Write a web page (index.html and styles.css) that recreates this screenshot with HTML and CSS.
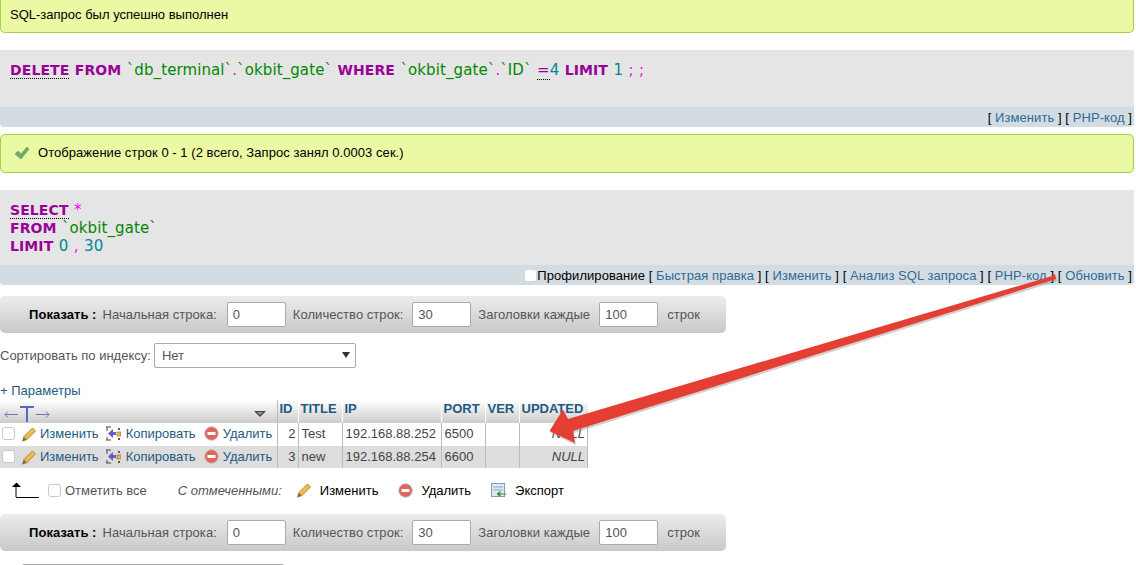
FILE: index.html
```html
<!DOCTYPE html>
<html lang="ru">
<head>
<meta charset="utf-8">
<title>phpMyAdmin</title>
<link rel="stylesheet" href="styles.css">
</head>
<body>
<div class="notice first">SQL-запрос был успешно выполнен</div>

<div class="sqlbox one">
  <div class="sql"><span class="kw doc">DELETE</span> <span class="kw">FROM</span> <span class="id">`db_terminal`</span><span class="pu">.</span><span class="id">`okbit_gate`</span> <span class="kw">WHERE</span> <span class="id">`okbit_gate`</span><span class="pu">.</span><span class="id">`ID`</span> <span class="op">=</span><span class="num">4</span> <span class="kw">LIMIT</span> <span class="num">1</span> <span class="pu">; ;</span></div>
  <div class="tools">[ <a>Изменить</a> ] [ <a>PHP-код</a> ]</div>
</div>

<div class="notice second">
  <svg class="check" width="16" height="14" viewBox="0 0 16 14"><path d="M1 8l3-3 3 3 6-7 2 2-8 10z" fill="#6fae6b" stroke="#5a9a58" stroke-width=".6"/></svg>
  <span>Отображение строк 0 - 1 (2 всего, Запрос занял 0.0003 сек.)</span>
</div>

<div class="sqlbox two">
  <div class="sql"><span class="kw doc">SELECT</span> <span class="pu">*</span><br><span class="kw">FROM</span> <span class="id">`okbit_gate`</span><br><span class="kw">LIMIT</span> <span class="num">0</span> <span class="pu">,</span> <span class="num">30</span></div>
  <div class="tools"><span class="fakecheck"></span><span class="profile">Профилирование</span> [ <a>Быстрая правка</a> ] [ <a>Изменить</a> ] [ <a>Анализ SQL запроса</a> ] [ <a>PHP-код</a> ] [ <a>Обновить</a> ]</div>
</div>

<div class="nav">
  <b class="show">Показать :</b>
  <span class="l1">Начальная строка:</span><span class="input">0</span>
  <span class="l2">Количество строк:</span><span class="input">30</span>
  <span class="l2">Заголовки каждые</span><span class="input">100</span>
  <span class="l3">строк</span>
</div>

<div class="sort"><span>Сортировать по индексу:</span><span class="select">Нет<i class="caret"></i></span></div>

<div class="params">+ Параметры</div>

<table class="data">
  <thead>
    <tr>
      <th class="c0"><span class="thead-tools">
        <svg width="48" height="16" viewBox="0 0 48 16"><path d="M2 8.500h13M2 8.500l3-3M2 8.500l3 3M33 8.500h13M46 8.500l-3-3M46 8.500l-3 3" fill="none" stroke="#6a78b8"/><path d="M17 1h14M24 1v15" fill="none" stroke="#5a6ab8" stroke-width="2"/></svg>
        <svg class="sorttri" width="12" height="6" viewBox="0 0 12 6"><path d="M0 0h12L6 6z" fill="#444"/><path d="M3 1h6L6 4z" fill="#999"/></svg>
      </span></th>
      <th class="c1">ID</th><th class="c2">TITLE</th><th class="c3">IP</th><th class="c4">PORT</th><th class="c5">VER</th><th class="c6">UPDATED</th>
    </tr>
  </thead>
  <tbody>
    <tr>
      <td class="c0"><div class="acts">
        <span class="fakecheck row"></span>
        <a class="act a1"><svg width="16" height="16" viewBox="0 0 16 16"><path d="M3 10.500L11.500 2l3 3L6 13.500z" fill="#eebd4f" stroke="#b5842c"/><path d="M1 15.500l1.500-5 3.500 3.500z" fill="#8a6a3a"/></svg>Изменить</a>
        <a class="act a2"><svg width="15" height="15" viewBox="0 0 15 15"><path d="M0 1h5M1 1v4M1 11v3M0 14h5" fill="none" stroke="#444"/><path d="M2 7.500L7 3v3h3v3H7v3z" fill="#6a5acd"/><rect x="11" y="6" width="4" height="4" fill="#f0c030" stroke="#555" stroke-width=".5"/><rect x="12" y="2" width="2" height="2" fill="#55a"/><rect x="12" y="12" width="2" height="2" fill="#555"/></svg>Копировать</a>
        <a class="act a3"><svg width="15" height="15" viewBox="0 0 15 15"><circle cx="7.500" cy="7.500" r="6.800" fill="#e0655a" stroke="#c9c0b8"/><rect x="3.500" y="6" width="8" height="3" fill="#fff"/></svg>Удалить</a>
      </div></td>
      <td class="r">2</td><td>Test</td><td>192.168.88.252</td><td>6500</td><td></td><td class="null">NULL</td>
    </tr>
    <tr class="even">
      <td class="c0"><div class="acts">
        <span class="fakecheck row"></span>
        <a class="act a1"><svg width="16" height="16" viewBox="0 0 16 16"><path d="M3 10.500L11.500 2l3 3L6 13.500z" fill="#eebd4f" stroke="#b5842c"/><path d="M1 15.500l1.500-5 3.500 3.500z" fill="#8a6a3a"/></svg>Изменить</a>
        <a class="act a2"><svg width="15" height="15" viewBox="0 0 15 15"><path d="M0 1h5M1 1v4M1 11v3M0 14h5" fill="none" stroke="#444"/><path d="M2 7.500L7 3v3h3v3H7v3z" fill="#6a5acd"/><rect x="11" y="6" width="4" height="4" fill="#f0c030" stroke="#555" stroke-width=".5"/><rect x="12" y="2" width="2" height="2" fill="#55a"/><rect x="12" y="12" width="2" height="2" fill="#555"/></svg>Копировать</a>
        <a class="act a3"><svg width="15" height="15" viewBox="0 0 15 15"><circle cx="7.500" cy="7.500" r="6.800" fill="#e0655a" stroke="#c9c0b8"/><rect x="3.500" y="6" width="8" height="3" fill="#fff"/></svg>Удалить</a>
      </div></td>
      <td class="r">3</td><td>new</td><td>192.168.88.254</td><td>6600</td><td></td><td class="null">NULL</td>
    </tr>
  </tbody>
</table>

<div class="bulk">
  <svg class="arrowup" width="28" height="16" viewBox="0 0 28 16"><path d="M5 15.500h23M5 15V4" fill="none" stroke="#000"/><path d="M1 5h9L5.500 .5z" fill="#000"/></svg>
  <span class="fakecheck all"></span><span class="checkall">Отметить все</span>
  <em>С отмеченными:</em>
  <a class="bact b1"><svg width="16" height="16" viewBox="0 0 16 16"><path d="M3 10.500L11.500 2l3 3L6 13.500z" fill="#eebd4f" stroke="#b5842c"/><path d="M1 15.500l1.500-5 3.500 3.500z" fill="#8a6a3a"/></svg>Изменить</a>
  <a class="bact b2"><svg width="15" height="15" viewBox="0 0 15 15"><circle cx="7.500" cy="7.500" r="6.800" fill="#e0655a" stroke="#c9c0b8"/><rect x="3.500" y="6" width="8" height="3" fill="#fff"/></svg>Удалить</a>
  <a class="bact b3"><svg width="16" height="15" viewBox="0 0 16 15"><rect x=".5" y=".5" width="13" height="13" fill="#dfe8f5" stroke="#7d9cc4"/><path d="M2 4h10M2 7h10" stroke="#9ab"/><path d="M15.500 11H6M6 11l3-2.500v5z" fill="#3f9a3f" stroke="#3f9a3f"/></svg>Экспорт</a>
</div>

<div class="nav lower">
  <b class="show">Показать :</b>
  <span class="l1">Начальная строка:</span><span class="input">0</span>
  <span class="l2">Количество строк:</span><span class="input">30</span>
  <span class="l2">Заголовки каждые</span><span class="input">100</span>
  <span class="l3">строк</span>
</div>

<div class="peek"></div>

<svg class="bigarrow" width="1136" height="565" viewBox="0 0 1136 565">
  <path d="M1052 276l3-2 1 5L573 431l2 12-25.500-12L563 409.500l5 9.500z" fill="#8f8a85" opacity=".4" transform="translate(1 2)"/>
  <path d="M1052 276l3-2 1 5L573 431l2 12-25.500-12L563 409.500l5 9.500z" fill="#e53f33"/>
</svg>
</body>
</html>
```

FILE: styles.css
```css
* { box-sizing: border-box; }
html, body { margin: 0; padding: 0; }
body {
  width: 1136px;
  height: 565px;
  overflow: hidden;
  position: relative;
  background: #fff;
  font-family: "Liberation Sans", Arial, sans-serif;
  font-size: 13px;
  color: #444;
}
a { color: #235a81; }

.notice {
  width: 1134px;
  background: #ebf8a4;
  border: 1px solid #a2d246;
  border-radius: 5px;
  color: #000;
  display: flex;
  align-items: center;
}
.notice.first { height: 33px; border-top: 0; border-radius: 0 0 5px 5px; padding: 0 0 3px 9px; }
.notice.second { height: 39px; margin-top: 7px; padding: 0 0 2px 13px; gap: 8px; letter-spacing: .05px; }
.check { flex: none; }

.sqlbox { width: 1134px; border-radius: 0 0 4px 4px; overflow: hidden; }
.sqlbox.one { margin-top: 17px; }
.sqlbox.two { margin-top: 17px; }
.sql {
  background: #e5e5e5;
  font-family: "DejaVu Sans", sans-serif;
  font-size: 15px;
  line-height: 18px;
  padding: 11px 10px 0;
  white-space: pre-wrap;
  letter-spacing: .1px;
  word-spacing: .5px;
}
.one .sql { height: 57px; }
.two .sql { height: 75px; }
.kw { color: #909; font-weight: bold; font-size: 14px; letter-spacing: .1px; }
.doc { border-bottom: 1px dotted #000; }
.id { color: #080; }
.pu { color: #f0f; }
.op { color: #909; border-bottom: 1px dotted #000; }
.num { color: #089; }
.tools {
  background: #d3dce3;
  height: 20px;
  line-height: 21px;
  text-align: right;
  color: #000;
  padding-right: 2px;
  letter-spacing: .07px;
}
.tools a { color: #2f6b97; }
.profile { color: #000; }
.fakecheck {
  display: inline-block;
  width: 13px;
  height: 13px;
  background: #fff;
  border: 1px solid #c8c8c8;
  border-radius: 3px;
}
.tools .fakecheck { vertical-align: -2px; border-color: #d8d8d8; }

.nav {
  width: 726px;
  height: 37px;
  margin-top: 11px;
  display: flex;
  align-items: center;
  padding-left: 29px;
  border-radius: 5px;
  background: linear-gradient(#ececec, #c9c9c9);
  color: #555;
  letter-spacing: .05px;
}
.nav.lower { margin-top: 13px; }
.show { color: #000; font-weight: bold; margin-right: 6px; }
.l1 { margin-right: 10px; }
.l2 { margin: 0 9px 0 7px; }
.l3 { margin-left: 9px; }
.input {
  display: block;
  width: 59px;
  height: 25px;
  line-height: 23px;
  background: #fff;
  border: 1px solid #aaa;
  border-radius: 2px;
  padding-left: 5px;
  color: #555;
}

.sort { display: flex; align-items: center; gap: 3px; height: 25px; margin-top: 10px; color: #555; }
.select {
  position: relative;
  width: 202px;
  height: 25px;
  line-height: 23px;
  border: 1px solid #aaa;
  border-radius: 2px;
  padding-left: 7px;
  background: #fff;
}
.caret {
  position: absolute;
  right: 5px;
  top: 8px;
  border: 4px solid transparent;
  border-top: 6px solid #333;
  border-bottom: 0;
}

.params { margin-top: 15px; height: 17px; line-height: 15px; color: #235a81; }

.data { border-collapse: collapse; table-layout: fixed; width: 588px; }
.data th {
  height: 23px;
  padding: 0 1px 6px 2px;
  font-size: 13px;
  font-weight: bold;
  color: #235a81;
  text-align: left;
  background: linear-gradient(#fff, #ccc);
  border-right: 1px solid #fff;
  white-space: nowrap;
}
.data td {
  height: 22.500px;
  padding: 0 2px 0 3px;
  border-right: 1px solid #bbb;
  white-space: nowrap;
}
.data tbody tr:first-child td { padding-bottom: 1px; }
.data th:last-child { border-right: 0; }
.even td { background: #ddd; }
.r { text-align: right; }
.null { text-align: right; font-style: italic; }
.data .c0 { width: 277px; padding: 0; border-right-color: #bbb; }
.data .c1 { width: 21px; }
.data .c2 { width: 44px; }
.data .c3 { width: 99px; }
.data .c4 { width: 44px; }
.data .c5 { width: 34px; }
.thead-tools { display: flex; justify-content: space-between; align-items: center; padding: 5px 11px 0 3px; height: 18px; }
.acts { display: flex; align-items: center; padding-left: 2px; }
.fakecheck.row { margin-right: 6px; }
.act { display: inline-flex; align-items: center; color: #235a81; gap: 3px; }
.a2 { margin-left: 7px; gap: 5px; }
.a3 { margin-left: 8px; gap: 4px; }

.bulk { display: flex; align-items: center; height: 22px; margin-top: 11px; padding-left: 11px; color: #555; }
.fakecheck.all { margin-left: 9px; margin-right: 4px; }
.bulk em { margin-left: 31px; }
.bact { display: inline-flex; align-items: center; color: #000; gap: 8px; }
.b1 { margin-left: 14px; }
.b2 { margin-left: 20px; }
.b3 { margin-left: 20px; }

.peek {
  width: 262px;
  height: 6px;
  margin: 13px 0 0 22px;
  border-top: 1px solid #aaa;
  border-radius: 2px 2px 0 0;
  background: #fff;
}
.bigarrow { position: absolute; left: 0; top: 0; pointer-events: none; }
```
